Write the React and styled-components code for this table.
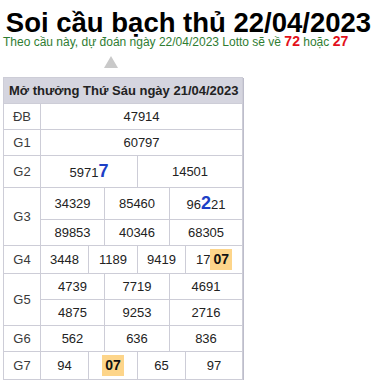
import React from 'react';
import styled, { createGlobalStyle } from 'styled-components';

const GlobalStyle = createGlobalStyle`
  body {
    margin: 0;
    background: #fff;
    font-family: "Liberation Sans", Arial, sans-serif;
  }
`;

const Page = styled.div`
  width: 377px;
  padding-top: 10px;
`;

const Title = styled.h1`
  margin: 0;
  text-align: center;
  font-size: 27.5px;
  line-height: 25px;
  font-weight: bold;
  color: #000;
`;

const Forecast = styled.p`
  margin: -1px 0 0 3px;
  font-size: 12px;
  line-height: 14px;
  color: #2f7d32;
`;

const Lucky = styled.b`
  font-size: 14px;
  color: #e3101a;
`;

const Pointer = styled.div`
  width: 0;
  height: 0;
  margin: 7px 0 0 104px;
  border-left: 7px solid transparent;
  border-right: 7px solid transparent;
  border-bottom: 12px solid #c9c9c9;
`;

const Board = styled.div`
  display: grid;
  grid-template-columns: 36px 47px 15px 32px 31px 15px 56px;
  grid-template-rows: 25px 25px 25px 31px 31px 25px 27px 25px 25px 25px 27px;
  gap: 1px;
  width: max-content;
  margin: 9px 0 0 3px;
  padding: 1px;
  background: #cdcdd7;
  box-shadow: 1px 1px 0 #bdbdcb;
`;

const Heading = styled.div`
  grid-column: 1 / -1;
  display: flex;
  align-items: center;
  padding-left: 5px;
  background: #d5d5df;
  font-size: 13px;
  font-weight: bold;
  color: #222;
`;

const Cell = styled.div`
  grid-column: ${p => p.$col};
  grid-row: ${p => p.$row};
  display: flex;
  align-items: center;
  justify-content: center;
  background: #fff;
  font-size: 13px;
  color: ${p => (p.$label ? '#3a3a3a' : '#222')};
`;

const Accent = styled.b`
  font-size: 18px;
  color: #1d3fc6;
`;

const Hit = styled.b`
  display: inline-block;
  padding: 2px 3px;
  line-height: 17px;
  font-size: 14px;
  background: #fdd58a;
  color: #111;
`;

const FULL = ['2 / 8'];
const HALF = ['2 / 5', '5 / 8'];
const THIRD = ['2 / 4', '4 / 6', '6 / 8'];
const QUARTER = ['2 / 3', '3 / 5', '5 / 7', '7 / 8'];

const prizes = [
  { label: 'ĐB', lines: [[FULL, ['47914']]] },
  { label: 'G1', lines: [[FULL, ['60797']]] },
  { label: 'G2', lines: [[HALF, [<>5971<Accent>7</Accent></>, '14501']]] },
  {
    label: 'G3',
    lines: [
      [THIRD, ['34329', '85460', <>96<Accent>2</Accent>21</>]],
      [THIRD, ['89853', '40346', '68305']],
    ],
  },
  { label: 'G4', lines: [[QUARTER, ['3448', '1189', '9419', <>17<Hit>07</Hit></>]]] },
  {
    label: 'G5',
    lines: [
      [THIRD, ['4739', '7719', '4691']],
      [THIRD, ['4875', '9253', '2716']],
    ],
  },
  { label: 'G6', lines: [[THIRD, ['562', '636', '836']]] },
  { label: 'G7', lines: [[QUARTER, ['94', <Hit>07</Hit>, '65', '97']]] },
];

function Results() {
  let row = 2;
  return (
    <Board>
      <Heading>Mở thưởng Thứ Sáu ngày 21/04/2023</Heading>
      {prizes.map(prize => {
        const start = row;
        const cells = [];
        prize.lines.forEach(([cols, values]) => {
          values.forEach((v, i) => {
            cells.push(
              <Cell key={`${row}-${i}`} $col={cols[i]} $row={`${row}`}>
                <span>{v}</span>
              </Cell>
            );
          });
          row += 1;
        });
        return (
          <React.Fragment key={prize.label}>
            <Cell $label $col="1" $row={`${start} / ${row}`}>{prize.label}</Cell>
            {cells}
          </React.Fragment>
        );
      })}
    </Board>
  );
}

export default function App() {
  return (
    <Page>
      <GlobalStyle />
      <Title>Soi cầu bạch thủ 22/04/2023</Title>
      <Forecast>
        Theo cầu này, dự đoán ngày 22/04/2023 Lotto sẽ về <Lucky>72</Lucky> hoặc <Lucky>27</Lucky>
      </Forecast>
      <Pointer />
      <Results />
    </Page>
  );
}
